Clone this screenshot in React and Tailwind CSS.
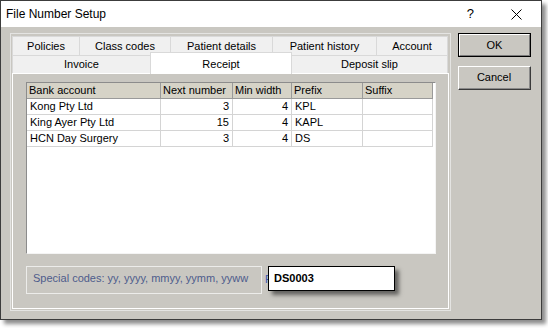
import React from 'react'

const topTabs = [
  { label: 'Policies', w: 'w-[67px]' },
  { label: 'Class codes', w: 'w-[91px]' },
  { label: 'Patient details', w: 'w-[102px]' },
  { label: 'Patient history', w: 'w-[104px]' },
  { label: 'Account', w: 'w-[72px]' },
]

const columns = [
  { label: 'Bank account', w: 'w-[134px]', align: 'text-left' },
  { label: 'Next number', w: 'w-[72px]', align: 'text-right' },
  { label: 'Min width', w: 'w-[59px]', align: 'text-right' },
  { label: 'Prefix', w: 'w-[71px]', align: 'text-left' },
  { label: 'Suffix', w: 'w-[70px]', align: 'text-left' },
]

const rows = [
  ['Kong Pty Ltd', '3', '4', 'KPL', ''],
  ['King Ayer Pty Ltd', '15', '4', 'KAPL', ''],
  ['HCN Day Surgery', '3', '4', 'DS', ''],
]

export default function App() {
  return (
    <div className="w-[548px] h-[328px] bg-white font-['Liberation_Sans',Arial,sans-serif] text-[11px] text-black">
      {/* Dialog window */}
      <div className="w-[542px] h-[320px] flex flex-col border border-[#3c3c3c] bg-[#c9c7c1] shadow-[4px_4px_4px_rgba(0,0,0,0.45)]">
        {/* Title bar */}
        <div className="h-[26px] bg-white flex items-center pl-[5px] shrink-0">
          <span className="text-[12px] flex-1">File Number Setup</span>
          <span className="text-[13px] mr-[37px]">?</span>
          <svg width="11" height="11" viewBox="0 0 11 11" className="mr-[19px]">
            <path d="M0.5 0.5 L10.5 10.5 M10.5 0.5 L0.5 10.5" stroke="#000" strokeWidth="1" fill="none" />
          </svg>
        </div>

        {/* Body */}
        <div className="flex pt-[6px] pl-[9px]">
          {/* Tab control */}
          <div className="w-[441px] h-[278px] border border-[#e4e4e2] p-[1px] pt-[2px] flex flex-col">
            <div className="flex h-[19px]">
              {topTabs.map((t, i) => (
                <div
                  key={t.label}
                  className={`${t.w} h-full bg-[#f0f0f0] border-t border-l border-[#d9d9d9] ${i === topTabs.length - 1 ? 'border-r' : ''} flex items-center justify-center`}
                >
                  {t.label}
                </div>
              ))}
            </div>
            <div className="flex h-[18px] items-end">
              <div className="w-[138px] h-full bg-[#f0f0f0] border-t border-l border-[#d9d9d9] flex items-center justify-center">
                Invoice
              </div>
              <div className="w-[142px] h-[22px] -mb-[1px] relative z-10 bg-white border-t border-l border-r border-[#d9d9d9] flex items-start justify-center pt-[3px]">
                Receipt
              </div>
              <div className="w-[156px] h-full bg-[#f0f0f0] border-t border-r border-[#d9d9d9] flex items-center justify-center">
                Deposit slip
              </div>
            </div>

            {/* Tab page */}
            <div className="h-[236px] border border-white pt-[8px] pl-[13px] flex flex-col">
              {/* Grid */}
              <div className="w-[410px] h-[172px] bg-white border-t border-l border-[#8c8c8c] border-r border-b border-r-[#f4f4f4] border-b-[#f4f4f4]">
                <div className="flex h-[16px] bg-[#d6d3c7] border-b border-[#9a9a9a] w-[406px]">
                  {columns.map((c) => (
                    <div key={c.label} className={`${c.w} border-r border-[#9a9a9a] pl-[2px] leading-[15px] truncate`}>
                      {c.label}
                    </div>
                  ))}
                </div>
                {rows.map((r, ri) => (
                  <div key={ri} className="flex h-[16px] border-b border-[#d4d4d4] w-[406px]">
                    {r.map((v, ci) => (
                      <div
                        key={ci}
                        className={`${columns[ci].w} ${columns[ci].align} border-r border-[#d4d4d4] px-[3px] leading-[15px]`}
                      >
                        {v}
                      </div>
                    ))}
                  </div>
                ))}
              </div>

              {/* Special codes + preview */}
              <div className="flex mt-[12px] relative">
                <div className="w-[236px] h-[28px] border border-[#ececea] text-[#4e5c8c] pl-[6px] pt-[3px]">
                  Special codes: yy, yyyy, mmyy, yymm, yyww
                </div>
                <div className="ml-[3px] pt-[5px] w-[3px] overflow-hidden text-[#3556b0]">P</div>
                <div className="absolute left-[242px] top-0 w-[127px] h-[25px] bg-white border border-black flex items-center pl-[5px] font-bold shadow-[4px_4px_4px_rgba(0,0,0,0.5)]">
                  DS0003
                </div>
              </div>
            </div>
          </div>

          {/* Buttons */}
          <div className="ml-[7px] flex flex-col gap-[9px]">
            <div className="w-[73px] h-[24px] border border-black">
              <div className="w-full h-full border-t border-l border-white border-r border-b border-r-[#7a7a7a] border-b-[#7a7a7a] flex items-center justify-center">
                OK
              </div>
            </div>
            <div className="w-[73px] h-[24px] border-t border-l border-white border-r border-b border-r-[#3a3a3a] border-b-[#3a3a3a]">
              <div className="w-full h-full border-r border-b border-[#8a8a8a] flex items-center justify-center">
                Cancel
              </div>
            </div>
          </div>
        </div>
      </div>
    </div>
  )
}
